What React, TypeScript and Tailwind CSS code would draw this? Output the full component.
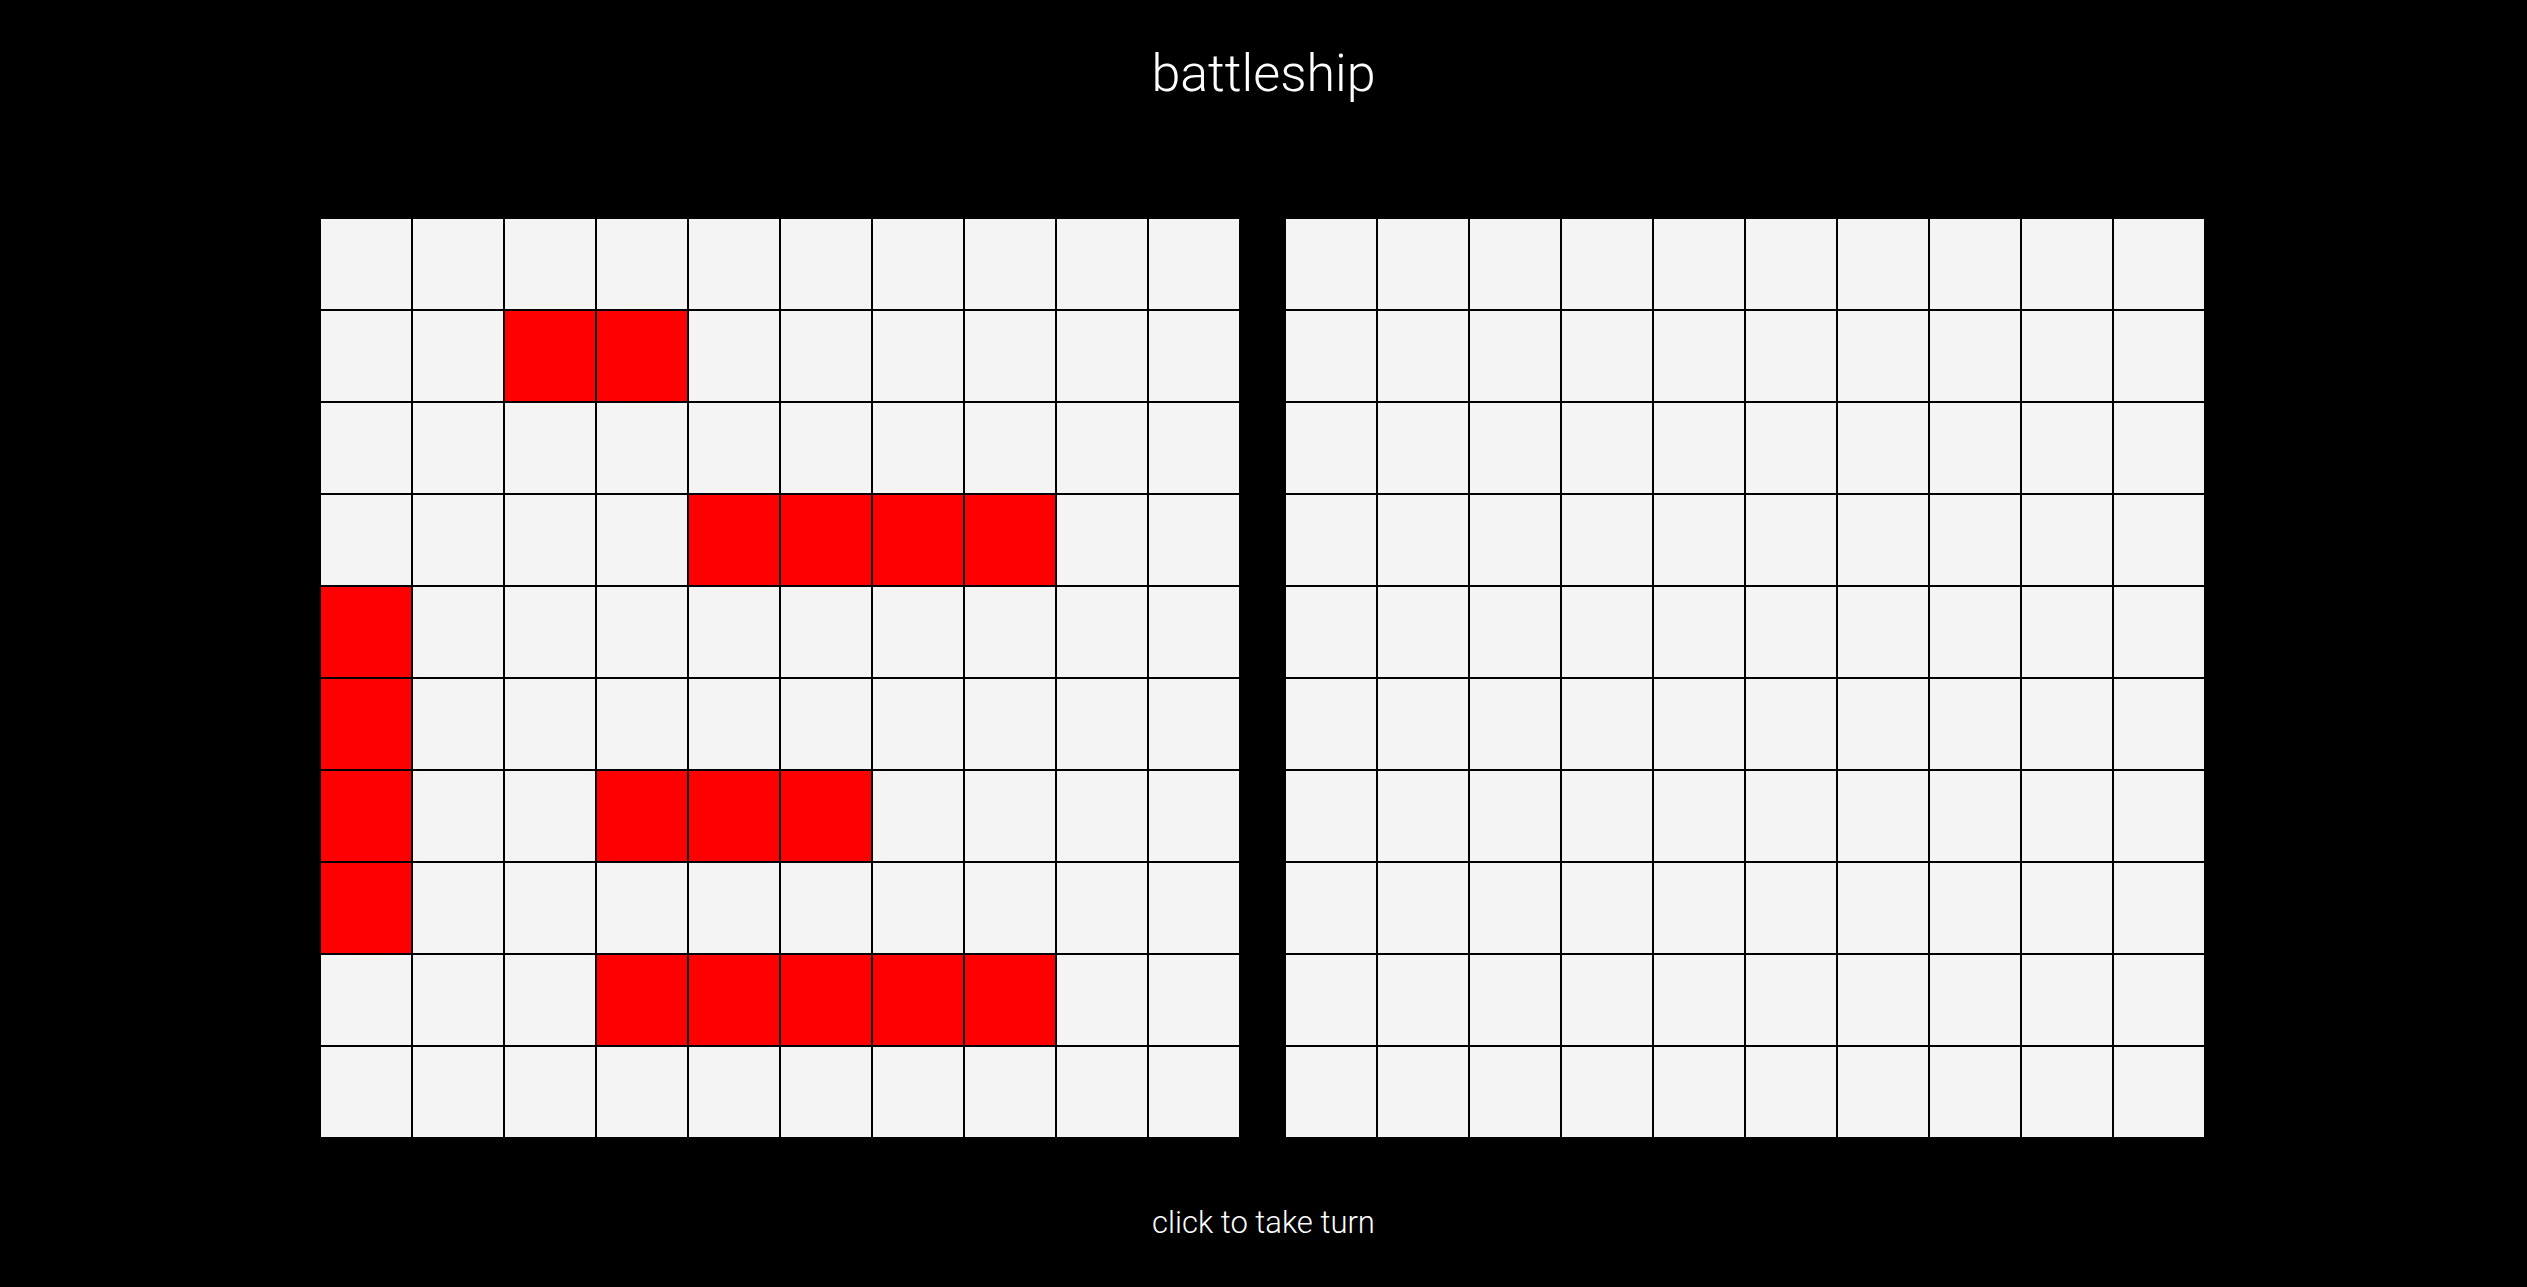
import React from "react";

const RED: Record<string, boolean> = {};
[
  [1, 2], [1, 3],
  [3, 4], [3, 5], [3, 6], [3, 7],
  [4, 0], [5, 0], [6, 0], [7, 0],
  [6, 3], [6, 4], [6, 5],
  [8, 3], [8, 4], [8, 5], [8, 6], [8, 7],
].forEach(([r, c]) => (RED[`${r}-${c}`] = true));

function Grid({ ships }: { ships: boolean }) {
  const cells = [];
  for (let r = 0; r < 10; r++) {
    for (let c = 0; c < 10; c++) {
      const red = ships && RED[`${r}-${c}`];
      cells.push(
        <div
          key={`${r}-${c}`}
          className={
            "w-[92px] h-[92px] border border-black " +
            (red ? "bg-[#ff0000]" : "bg-[#f4f4f4]")
          }
        />
      );
    }
  }
  return <div className="grid grid-cols-[repeat(10,92px)] w-[920px]">{cells}</div>;
}

export default function App() {
  return (
    <div
      className="min-h-screen bg-black text-white flex flex-col items-center"
      style={{ fontFamily: "Roboto, 'Liberation Sans', sans-serif" }}
    >
      <h1 className="font-light text-[52px] leading-none mt-[48px] h-[170px]">battleship</h1>
      <div className="flex gap-[45px] mr-[2px]">
        <Grid ships={true} />
        <Grid ships={false} />
      </div>
      <div className="font-light text-[31px] leading-none mt-[69px]">click to take turn</div>
    </div>
  );
}
